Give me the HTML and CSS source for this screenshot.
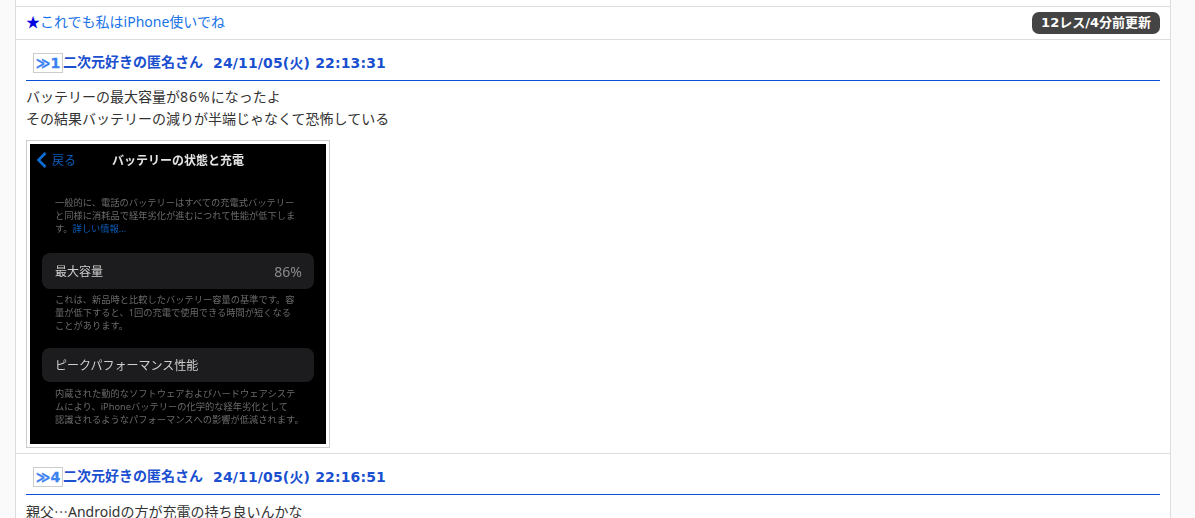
FILE: index.html
```html
<!DOCTYPE html>
<html lang="ja">
<head>
  <meta charset="UTF-8" />
  <title>これでも私はiPhone使いでね</title>
  <link rel="stylesheet" href="styles.css">
</head>
<body>
  <div class="container">
    <!-- スレタイ -->
    <div class="thread-title">
      <a class="title-link" href="#"><span class="star">★</span>これでも私はiPhone使いでね</a>
      <span class="badge">12レス/4分前更新</span>
    </div>
    <!-- レス1 -->
    <div class="res">
      <div class="res-head">
        <span class="res-no">≫1</span><span class="res-name">二次元好きの匿名さん</span><span class="res-date">24/11/05(<span class="wday">火</span>) 22:13:31</span>
      </div>
      <div class="res-body">バッテリーの最大容量が<span class="num">86%</span>になったよ<br>その結果バッテリーの減りが半端じゃなくて恐怖している</div>
      <div class="thumb">
        <div class="phone">
          <div class="phone-nav">
            <svg class="chevron" width="11" height="16" viewBox="0 0 11 16"><path d="M9.5 1 2.5 8l7 7" fill="none" stroke="#0a6fd8" stroke-width="2.6"/></svg>
            <span class="back">戻る</span>
            <span class="phone-title">バッテリーの状態と充電</span>
          </div>
          <p class="note note-first">一般的に、電話のバッテリーはすべての充電式バッテリー<br>と同様に消耗品で経年劣化が進むにつれて性能が低下しま<br>す。<span class="more">詳しい情報...</span></p>
          <div class="cell"><span>最大容量</span><span class="cell-val">86%</span></div>
          <p class="note">これは、新品時と比較したバッテリー容量の基準です。容<br>量が低下すると、1回の充電で使用できる時間が短くなる<br>ことがあります。</p>
          <div class="cell cell-peak"><span>ピークパフォーマンス性能</span></div>
          <p class="note">内蔵された動的なソフトウェアおよびハードウェアシステ<br>ムにより、iPhoneバッテリーの化学的な経年劣化として<br>認識されるようなパフォーマンスへの影響が低減されます。</p>
          <div class="cell"></div>
        </div>
      </div>
    </div>
    <!-- レス4 -->
    <div class="res">
      <div class="res-head">
        <span class="res-no">≫4</span><span class="res-name">二次元好きの匿名さん</span><span class="res-date">24/11/05(<span class="wday">火</span>) 22:16:51</span>
      </div>
      <div class="res-body">親父<span class="ellipsis">…</span>Androidの方が充電の持ち良いんかな</div>
    </div>
  </div>
</body>
</html>
```

FILE: styles.css
```css
html, body { height: 518px; overflow: hidden; }
body { margin: 0; background: #fafafa; font-family: "Noto Sans", "Noto Sans CJK JP", sans-serif; font-size: 14px; color: #333; }
.container { width: 1156px; height: 518px; margin-left: 15px; padding: 6px 10px 0; background: #fff; border: solid #ddd; border-width: 0 1px; box-sizing: border-box; overflow: hidden; }

.thread-title { display: flex; justify-content: space-between; align-items: center; box-sizing: border-box; height: 34px; margin: 0 -10px; padding: 0 10px; border: solid #ddd; border-width: 1px 0; }
.title-link { color: #1a73e8; text-decoration: none; line-height: 30px; padding-bottom: 2px; }
.star { color: #0000e0; }
.badge { background: #444; color: #fff; font-family: "DejaVu Sans", "Noto Sans CJK JP", sans-serif; font-size: 13px; font-weight: bold; line-height: 22px; padding: 0 9px; border-radius: 7px; }

.res { margin: 0 -10px; padding: 13px 10px 5px; border-bottom: 1px solid #ddd; }
.res-head { display: flex; align-items: flex-start; height: 27px; padding-left: 7px; border-bottom: 1px solid #0b4fd8; font-weight: bold; line-height: 18px; color: #1a4fd0; }
.res-no { box-sizing: border-box; width: 30px; height: 20px; line-height: 19px; border: 1px solid #ccc; text-align: center; color: #3b82f0; font-family: "DejaVu Sans", "Noto Sans CJK JP", sans-serif; font-size: 14px; -webkit-text-stroke: 0.3px #3b82f0; }
.res-name { margin-right: 10px; }
.res-date { font-family: "DejaVu Sans", "Noto Sans CJK JP", sans-serif; letter-spacing: 0.15px; white-space: nowrap; }
.wday { font-family: "Noto Sans CJK JP", sans-serif; }
.res-body { margin-top: 5px; line-height: 22px; }
.num { letter-spacing: 1px; }
.ellipsis { font-family: "Noto Sans CJK JP", sans-serif; }

.thumb { width: 304px; height: 308px; box-sizing: border-box; margin-top: 10px; padding: 3px; border: 1px solid #ccc; }
.phone { height: 300px; background: #000; overflow: hidden; padding: 0 12px; box-sizing: border-box; color: #6a6a6a; filter: blur(0.4px); }
.phone-nav { display: flex; align-items: center; height: 32px; margin: 0 -12px; padding-left: 6px; }
.back { color: #0a5fc0; font-size: 12px; margin-left: 5px; }
.phone-title { color: #e4e4e4; font-size: 12px; font-weight: bold; margin-left: 36px; white-space: nowrap; }
.chevron { flex: none; }
.note { margin: 0; padding: 0 13px; font-size: 9.25px; line-height: 13px; white-space: nowrap; }
.note-first { margin-top: 20px; }
.more { color: #0a5fc0; }
.cell { display: flex; justify-content: space-between; align-items: center; height: 36px; margin: 18px 0 4px; padding: 0 12px 0 13px; background: #1c1c1e; border-radius: 8px; color: #cfcfcf; font-size: 12px; }
.cell-val { color: #8a8a8a; font-size: 14px; }
.cell-peak { height: 34px; margin: 16px 0 5px; }
```
